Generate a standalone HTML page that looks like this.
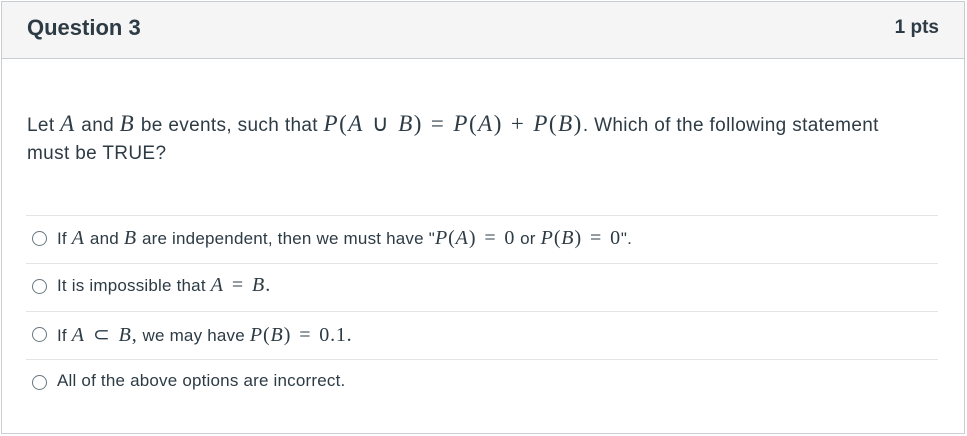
<!DOCTYPE html>
<html><head><style>
body{margin:0;width:967px;height:436px;background:#fff;font-family:"Liberation Sans",sans-serif;color:#2d3b45;position:relative;overflow:hidden}
.box{position:absolute;left:1px;top:1px;width:962px;height:431px;border:1px solid #c7cdd1}
.hdr{position:absolute;left:0;top:0;width:962px;height:56px;background:#f5f5f5;border-bottom:1px solid #c7cdd1}
.t{position:absolute;white-space:nowrap}
.m{font-family:"Liberation Serif",serif;font-style:italic;font-size:23px;letter-spacing:1.5px}
.r{font-family:"Liberation Serif",serif;font-size:23px;letter-spacing:1.5px}
.ms{font-family:"Liberation Serif",serif;font-style:italic;font-size:20px;letter-spacing:1px}
.rs{font-family:"Liberation Serif",serif;font-size:20px;letter-spacing:0.8px}
.op{margin:0 8px}
.line{position:absolute;left:26px;width:912px;height:1px;background:#e2e5e7}
.rad{position:absolute;left:32px;width:13px;height:13px;border:1px solid #6b7780;border-radius:50%}
.opt{position:absolute;left:57px;font-size:17px;letter-spacing:0.2px;white-space:nowrap}
</style></head><body>
<div class="box">
<div class="hdr"></div>
</div>
<div class="t" style="left:27px;top:15px;font-size:22px;font-weight:bold">Question 3</div>
<div class="t" style="right:28px;top:17px;font-size:19px;font-weight:bold">1 pts</div>
<div class="t" style="left:27px;top:111px;font-size:19px;letter-spacing:0.35px">Let <span class="m">A</span> and <span class="m">B</span> be events, such that <span class="m">P</span><span class="r">(</span><span class="m">A</span><span class="r op">∪</span><span class="m">B</span><span class="r">)</span><span class="r op">=</span><span class="m">P</span><span class="r">(</span><span class="m">A</span><span class="r">)</span><span class="r op">+</span><span class="m">P</span><span class="r">(</span><span class="m">B</span><span class="r">)</span>. Which of the following statement</div>
<div class="t" style="left:27px;top:143px;font-size:19px;letter-spacing:0.35px">must be TRUE?</div>
<div class="line" style="top:215px"></div>
<div class="line" style="top:263px"></div>
<div class="line" style="top:311px"></div>
<div class="line" style="top:359px"></div>
<div class="rad" style="top:231px"></div>
<div class="rad" style="top:279px"></div>
<div class="rad" style="top:327px"></div>
<div class="rad" style="top:375px"></div>
<div class="opt" style="top:227px">If <span class="ms">A</span> and <span class="ms">B</span> are independent, then we must have "<span class="ms">P</span><span class="rs">(</span><span class="ms">A</span><span class="rs">)</span><span class="rs op">=</span><span class="rs">0</span> or <span class="ms">P</span><span class="rs">(</span><span class="ms">B</span><span class="rs">)</span><span class="rs op">=</span><span class="rs">0</span>".</div>
<div class="opt" style="top:274px">It is impossible that <span class="ms">A</span><span class="rs op">=</span><span class="ms">B</span><span class="rs">.</span></div>
<div class="opt" style="top:322px">If <span class="ms">A</span><span class="rs op">⊂</span><span class="ms">B</span><span class="rs">,</span> we may have <span class="ms">P</span><span class="rs">(</span><span class="ms">B</span><span class="rs">)</span><span class="rs op">=</span><span class="rs">0.1.</span></div>
<div class="opt" style="top:371px">All of the above options are incorrect.</div>
</body></html>
